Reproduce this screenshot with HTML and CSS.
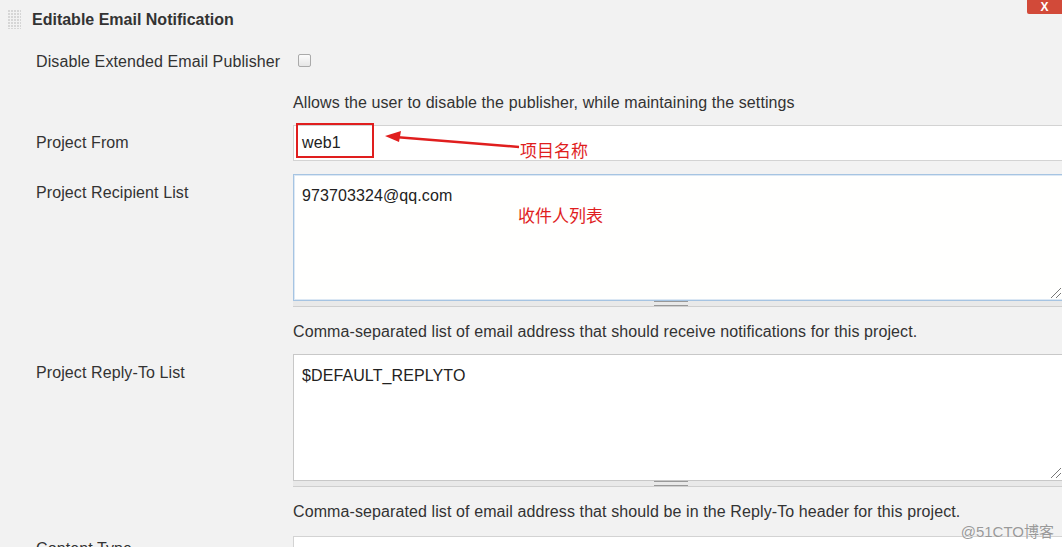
FILE: index.html
```html
<!DOCTYPE html>
<html>
<head>
<meta charset="utf-8">
<link rel="stylesheet" href="styles.css">
</head>
<body>
<div class="page">
  <div class="header">
    <svg class="grip" width="13" height="19" viewBox="0 0 13 19">
      <defs><pattern id="dots" width="3" height="3" patternUnits="userSpaceOnUse"><rect x="0" y="0" width="2" height="2" fill="#d6d6d6"/></pattern></defs>
      <rect width="13" height="19" fill="url(#dots)"/>
    </svg>
    <span class="title">Editable Email Notification</span>
  </div>
  <div class="close">X</div>

  <div class="row row-check">
    <div class="label">Disable Extended Email Publisher</div>
    <div class="field"><span class="checkbox"></span></div>
  </div>
  <div class="row row-desc first-desc">
    <div class="label"></div>
    <div class="field desc">Allows the user to disable the publisher, while maintaining the settings</div>
  </div>

  <div class="row row-input">
    <div class="label">Project From</div>
    <div class="field"><div class="input">web1</div></div>
  </div>

  <div class="row row-area recipients">
    <div class="label">Project Recipient List</div>
    <div class="field">
      <div class="area focused">973703324@qq.com<span class="corner"></span></div>
      <div class="handle"><span class="grabber"></span></div>
    </div>
  </div>
  <div class="row row-desc">
    <div class="label"></div>
    <div class="field desc">Comma-separated list of email address that should receive notifications for this project.</div>
  </div>

  <div class="row row-area replyto">
    <div class="label">Project Reply-To List</div>
    <div class="field">
      <div class="area">$DEFAULT_REPLYTO<span class="corner"></span></div>
      <div class="handle"><span class="grabber"></span></div>
    </div>
  </div>
  <div class="row row-desc">
    <div class="label"></div>
    <div class="field desc">Comma-separated list of email address that should be in the Reply-To header for this project.</div>
  </div>

  <div class="row row-last">
    <div class="label">Content Type</div>
    <div class="field"><div class="input"></div></div>
  </div>

  <div class="annot-box"></div>
  <svg class="arrow" width="150" height="24" viewBox="0 0 150 24">
    <line x1="12" y1="6" x2="136" y2="16" stroke="#e01e1e" stroke-width="2.5"/>
    <polygon points="2,5 18,0 16,11" fill="#e01e1e"/>
  </svg>
  <div class="annot annot-1">项目名称</div>
  <div class="annot annot-2">收件人列表</div>
  <div class="watermark">@51CTO博客</div>
</div>
</body>
</html>
```

FILE: styles.css
```css
html, body {
  margin: 0;
  padding: 0;
  background: #f2f2f2;
  overflow: hidden;
}
body {
  font-family: "Liberation Sans", Arial, sans-serif;
  color: #333;
  font-size: 16px;
}
.page {
  position: relative;
  box-sizing: border-box;
  width: 1062px;
  height: 547px;
  padding-top: 1px;
  overflow: hidden;
  letter-spacing: 0.1px;
}
.header {
  height: 38px;
  display: flex;
  align-items: center;
  padding-left: 8px;
}
.grip {
  margin-right: 11px;
  margin-top: -1px;
}
.title {
  font-weight: bold;
  font-size: 16px;
  color: #333;
  margin-top: -1px;
  letter-spacing: 0;
}
.close {
  position: absolute;
  top: 0;
  right: 0;
  width: 35px;
  height: 14px;
  background: #d24a39;
  color: #fff;
  font-weight: bold;
  font-size: 12px;
  line-height: 14px;
  text-align: center;
  border-bottom-left-radius: 2px;
}
.row {
  display: grid;
  grid-template-columns: 293px 771px;
}
.label {
  padding-left: 36px;
  line-height: 18px;
}
.row-check {
  height: 46px;
  align-items: center;
}
.checkbox {
  display: block;
  width: 11px;
  height: 11px;
  margin-left: 5px;
  margin-top: -4px;
  border: 1px solid #aaa;
  border-radius: 2px;
  background: linear-gradient(#fcfcfc, #e6e6e6);
}
.row-desc {
  height: 36px;
  align-items: center;
}
.desc {
  font-size: 16px;
  line-height: 18px;
}
.row-desc.first-desc {
  margin-bottom: 4px;
}
.row-input {
  align-items: center;
  margin-bottom: 13px;
}
.input {
  box-sizing: border-box;
  height: 36px;
  border: 1px solid #d3d3d3;
  background: #fff;
  padding: 8px 8px;
  line-height: 18px;
  color: #222;
}
.row-area .label {
  padding-top: 10px;
}
.area {
  position: relative;
  box-sizing: border-box;
  height: 127px;
  background: #fff;
  border: 1px solid #c8c8c8;
  padding: 12px 8px;
  line-height: 18px;
  color: #222;
}
.area.focused {
  background: #fffffe;
  border: 1px solid #a6c4e2;
  box-shadow: inset 0 0 0 1px #dce8f4;
}
.corner {
  position: absolute;
  right: 2px;
  bottom: 2px;
  width: 10px;
  height: 10px;
  background: linear-gradient(135deg, transparent 45%, #777 46%, #777 52%, transparent 53%, transparent 70%, #777 71%, #777 77%, transparent 78%);
}
.handle {
  box-sizing: border-box;
  height: 6px;
  background: #e9e9e9;
  border-bottom: 1px solid #cfcfcf;
  display: flex;
  justify-content: center;
  align-items: center;
}
.grabber {
  display: block;
  width: 34px;
  height: 3px;
  border-top: 1px solid #999;
  border-bottom: 1px solid #999;
  margin-left: -16px;
}
.recipients + .row-desc {
  margin-top: 7px;
  margin-bottom: 4px;
}
.replyto + .row-desc {
  margin-top: 7px;
  margin-bottom: 6px;
}
.row-last .label {
  padding-top: 4px;
}
.annot-box {
  position: absolute;
  left: 296px;
  top: 123px;
  width: 74px;
  height: 31px;
  border: 2px solid #e01e1e;
}
.arrow {
  position: absolute;
  left: 383px;
  top: 131px;
}
.annot {
  position: absolute;
  color: #e01e1e;
  font-family: "Noto Sans CJK SC", sans-serif;
  font-size: 17px;
  line-height: 20px;
  letter-spacing: 0;
}
.annot-1 {
  left: 520px;
  top: 140px;
}
.annot-2 {
  left: 518px;
  top: 205px;
}
.watermark {
  position: absolute;
  right: 8px;
  top: 520px;
  color: #999;
  font-family: "Liberation Sans", "Noto Sans CJK SC", sans-serif;
  font-size: 15px;
  letter-spacing: 0;
  text-shadow: 0 0 1px #fff;
}
```
